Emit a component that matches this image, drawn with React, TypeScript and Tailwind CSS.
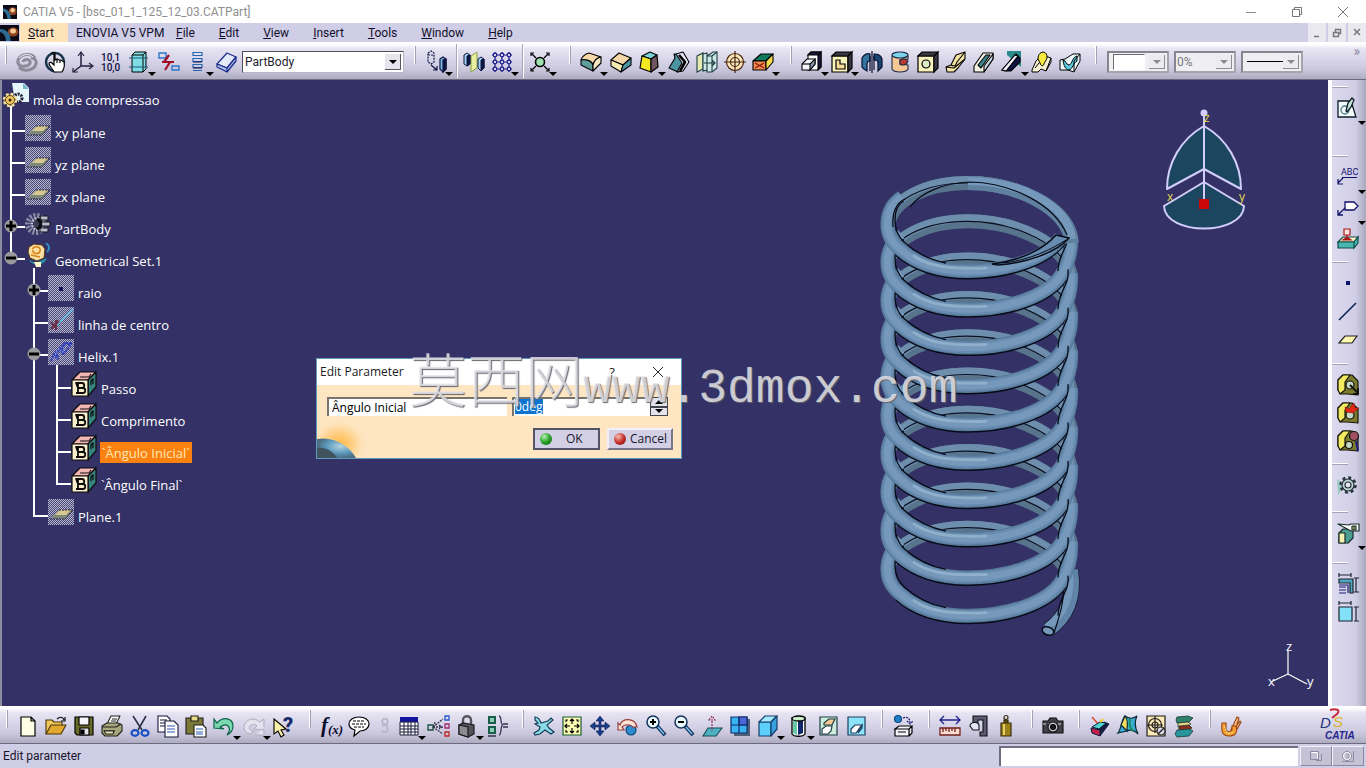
import type { ReactNode } from "react";
import clsx from "clsx";

type Tool = { icon: string; label: string; menu?: boolean; narrow?: boolean };

const NAVY = "#10106a";

const icons: Record<string, ReactNode> = {
  update: (
    <g fill="none" stroke="#8d8b98" strokeWidth="3">
      <path d="M20 8C17 3 6 3 3 10c-1 5 3 7 7 6 4 0 6-3 5-5-2-3-7-1-7 1" />
      <path d="M4 17c4 5 15 4 17-3 1-4-2-6-5-6" />
      <path d="M4 8c5-5 11-4 14-1" stroke="#f3f2f8" strokeWidth="1" />
    </g>
  ),
  hand: (
    <g stroke="#000" strokeWidth="1.2">
      <circle cx="12" cy="12" r="9" fill="none" stroke="#18324a" strokeWidth="2.5" />
      <path
        d="M9 3c1-1 3-1 3 1v6l2-1 2 1 2 0 3 2c1 4 0 7-2 10h-8c-1-3-4-5-5-8 0-2 2-2 3-1l2 2V4z"
        fill="#fff"
      />
      <path d="M14 9v4M17 10v3" />
    </g>
  ),
  axis: (
    <g fill="none" stroke="#20203c" strokeWidth="1.5">
      <path d="M10 3v13h11M10 16l-8 6" />
      <path d="M7 6l3-4 3 4M18 13l4 3-4 3M2 18v4h5" strokeWidth="1.2" />
    </g>
  ),
  numbers: (
    <g fontFamily="Roboto, sans-serif" fontSize="10" fontWeight="500" fill="#0d0d3c">
      <text x="2" y="11">10,1</text>
      <text x="2" y="21">10,0</text>
    </g>
  ),
  cylinder: (
    <g stroke="#000" strokeWidth="1">
      <path d="M5 5l3-3h11v17l-3 3H5z" fill="#7fdde6" />
      <path d="M5 5h11v17M16 5l3-3" fill="none" />
      <path d="M2 8h19M2 17h19" stroke="#1b5c7a" />
    </g>
  ),
  broken: (
    <g fill="none">
      <path d="M2 3h7v5H2zM15 16h7v4h-7z" stroke="#2b78c8" strokeWidth="1.4" />
      <path d="M12 5l-5 7h6l-5 8M5 12h12" stroke="#a01028" strokeWidth="2.2" />
    </g>
  ),
  stack: (
    <g fill="none" stroke="#2468b4" strokeWidth="1.2">
      <path d="M8 2.500h9v3H8zM8 8.500h9v3H8zM8 14.500h9v3H8zM8 20.500h9" />
      <path d="M8 12h9M8 18h9" stroke="#10104a" />
    </g>
  ),
  slab: (
    <g stroke="#1e2a8a" strokeWidth="1.2" strokeLinejoin="round">
      <path d="M2 14L12 3l9 4-9 11z" fill="#e4e9f8" />
      <path d="M2 14v3l10 5v-4zM12 18l9-11v4l-9 11z" fill="#a8bce4" />
    </g>
  ),
  move: (
    <g stroke="#0d1440" strokeWidth="1.2">
      <path d="M4 3l3-2 3 2v9l-3 2-3-2zM4 5h6" fill="none" strokeDasharray="2 1" />
      <path d="M7 15l6 5M13 16v4h-4" fill="none" />
      <path d="M16 9l3-2 3 2v10l-3 3-3-3z" fill="#7fc0ec" />
      <path d="M19 10v12l3-3V9z" fill="#0d1440" />
    </g>
  ),
  mirror: (
    <g stroke="#0d1440" strokeWidth="1">
      <path d="M2 5l3-2 3 2v9l-3 2-3-2z" fill="#a4d4f0" />
      <path d="M9 6l6-4v16l-6 4z" fill="#e8efa0" stroke="#8aa040" />
      <path d="M16 9l3-2 3 2v9l-3 3-3-3z" fill="#a4d4f0" />
      <path d="M19 10v11l3-3V9zM5 6v10l3-2V5z" fill="#0d1440" />
    </g>
  ),
  grid: (
    <g fill="none" stroke="#1a1a8c" strokeWidth="1.2">
      <path d="M2 5h20M2 12h20M2 19h20M5 2v20M12 2v20M19 2v20" />
      <g fill="#d8d6ea">
        <circle cx="5" cy="5" r="1.8" />
        <circle cx="12" cy="5" r="1.8" />
        <circle cx="19" cy="5" r="1.8" />
        <circle cx="5" cy="12" r="1.8" />
        <circle cx="12" cy="12" r="1.8" />
        <circle cx="19" cy="12" r="1.8" />
        <circle cx="5" cy="19" r="1.8" />
        <circle cx="12" cy="19" r="1.8" />
        <circle cx="19" cy="19" r="1.8" />
      </g>
    </g>
  ),
  explode: (
    <g stroke="#000" strokeWidth="1.2" fill="none">
      <path d="M8 8L4 4M16 8l4-4M8 16l-4 4M16 16l4 4M3 6V3h3M18 3h3v3M3 18v3h3M18 21h3v-3" />
      <circle cx="12" cy="12" r="4.500" fill="#9fe0b0" strokeWidth="1.6" />
    </g>
  ),
  fillet: (
    <g stroke="#000" strokeWidth="1.1" strokeLinejoin="round">
      <path d="M2 10c1-3 4-6 8-7l12 4c-5 1-7 4-8 8C13 11 7 9 2 10z" fill="#f6d8a8" />
      <path d="M2 10c6-1 11 1 12 5v6L2 15z" fill="#5f9c9c" />
      <path d="M14 15c1-4 3-7 8-8v6l-8 8z" fill="#f3e6c0" />
    </g>
  ),
  chamfer: (
    <g stroke="#000" strokeWidth="1.1" strokeLinejoin="round">
      <path d="M2 10l8-7 12 5-8 7z" fill="#f6d8a8" />
      <path d="M2 10l12 5-2 7-10-6z" fill="#f8ecb4" />
      <path d="M14 15l8-7v7l-10 7z" fill="#4f97a4" />
    </g>
  ),
  draft: (
    <g stroke="#000" strokeWidth="1.2" strokeLinejoin="round">
      <path d="M5 6l8-4 7 3-6 4z" fill="#7ed0da" />
      <path d="M5 6l9 3v13L3 18z" fill="#f4e920" />
      <path d="M14 9l6-4 1 12-7 5z" fill="#6e5560" />
    </g>
  ),
  shell: (
    <g stroke="#000" strokeWidth="1.1" strokeLinejoin="round">
      <path d="M2 18L8 8l-1-4 8 1 1 8-5 9z" fill="#4a95a0" />
      <path d="M9 4l7-2 6 10-6 9-6 1 5-9z" fill="#e6e4f2" />
      <path d="M12 5l6 7-5 9" fill="none" strokeWidth="2.6" />
    </g>
  ),
  thickness: (
    <g stroke="#1c3c44" strokeWidth="1.1">
      <path d="M2 6l6-3v16l-6 3z" fill="#e6e9b0" />
      <path d="M8 4l4-1v17l-4 1zM12 6l6-4h4v16l-5 4h-5z" fill="#cfe8e6" />
      <path d="M12 6h5v16M17 6l5-4M9 13h11M17 10l3 3-3 3" fill="none" />
    </g>
  ),
  target: (
    <g fill="none" stroke="#4a2410" strokeWidth="1.2">
      <circle cx="12" cy="12" r="8.5" fill="#f8e6b8" />
      <circle cx="12" cy="12" r="4.500" />
      <path d="M12 1v22M1 12h22" />
    </g>
  ),
  replaceFace: (
    <g stroke="#000" strokeWidth="1.1" strokeLinejoin="round">
      <path d="M2 11l8-7h12l-7 7z" fill="#137a5c" />
      <path d="M2 11h13v9H2z" fill="#f08a50" />
      <path d="M15 11l7-7v8l-7 8z" fill="#f4dc50" />
      <path d="M4 13l9 5M13 13l-9 5" stroke="#8c1a10" />
    </g>
  ),
  pad: (
    <g stroke="#000" strokeWidth="1.1">
      <path d="M8 5l3-3h10v15l-3 3H8z" fill="#fff" />
      <path d="M18 5l3-3v15l-3 3zM8 5l3-3h10l-3 3z" fill="#191942" />
      <path d="M2 14l5-5h8v5l-5 6H2z" fill="#f3f3fa" />
      <path d="M10 14v6l5-6V9z" fill="#8d96b4" />
      <path d="M2 14h8" />
    </g>
  ),
  pocket: (
    <g stroke="#000" strokeWidth="1.2">
      <path d="M2 6h16v16H2z" fill="#f8f2bc" />
      <path d="M2 6l4-4h16l-4 4zM18 6l4-4v16l-4 4z" fill="#3c3644" />
      <path d="M6 10h4v4h5v5H6z" fill="#f6dc96" />
    </g>
  ),
  shaft: (
    <g stroke="#0a0f30" strokeWidth="1.2">
      <path d="M2 8c2-4 6-5 8-4v7c-2 0-3 1-3 3v7c-2-1-4-2-5-4z" fill="#3474a0" />
      <path d="M14 4c4 0 7 1 8 5v8l-4 4v-8c0-2-2-3-4-3z" fill="#1c4670" />
      <path d="M10 6v15M14 6v14M12 1v22" />
    </g>
  ),
  groove: (
    <g stroke="#1a2a48" strokeWidth="1.1">
      <path d="M4 6v13c2 4 14 4 16 0v-4l-8-1v-4l8-1V6z" fill="#f6c896" />
      <ellipse cx="12" cy="5" rx="8" ry="3" fill="#7cd4ec" />
      <path d="M12 10c3-2 7-1 8 1-1 4-6 5-8 3z" fill="#b83a30" />
    </g>
  ),
  hole: (
    <g stroke="#000" strokeWidth="1.2">
      <path d="M2 6h16v16H2z" fill="#f8f2bc" />
      <path d="M2 6l4-4h16l-4 4zM18 6l4-4v16l-4 4z" fill="#3c3644" />
      <circle cx="10" cy="14" r="4" fill="#dceac8" />
    </g>
  ),
  rib: (
    <g stroke="#000" strokeWidth="1.1" strokeLinejoin="round">
      <path d="M2 17l5-2 5-10 9-3v7l-7 9-4 4H3z" fill="#f6e4a4" />
      <path d="M7 15c4 2 5 0 6-3l8-10M2 17l8 1 11-9" fill="none" />
    </g>
  ),
  slot: (
    <g stroke="#000" strokeWidth="1.1" strokeLinejoin="round">
      <path d="M2 16l9-13h10v6l-9 13H2z" fill="#f4f0e0" />
      <path d="M6 15l8-10h4L9 18z" fill="#3c8490" />
      <path d="M12 16l9-12v5l-9 13z" fill="#c8d8e4" />
    </g>
  ),
  stiffener: (
    <g stroke="#000" strokeWidth="1.1">
      <path d="M7 1h14v16L7 5z" fill="#2a8a8c" stroke="none" />
      <path d="M2 20L16 4l4 4v4l-9 9H5z" fill="#0d1440" />
      <path d="M2 20L15 5l3 1L6 21z" fill="#f6f4fc" />
    </g>
  ),
  loft: (
    <g stroke="#000" strokeWidth="1" strokeLinejoin="round">
      <path d="M2 20l4-9 6-6 9 3-5 13-5-2-3 3H2z" fill="#f4f0d0" />
      <path d="M8 9c0-9 10-9 9-1-1 3-2 3-3 6-1 3-3 2-4-1z" fill="#f8e840" />
      <path d="M5 18l4-5M21 8v4l-5 9" fill="none" />
    </g>
  ),
  loftCut: (
    <g stroke="#000" strokeWidth="1" strokeLinejoin="round">
      <path d="M2 10l5-1 8-5h7v7l-6 11-6-2H2z" fill="#eef8fa" />
      <path d="M5 10c3 0 3 5 6 5s3-8 8-9v5c-4 2-4 8-8 9-4-1-5-4-6-10z" fill="#5cc8e0" />
      <path d="M22 4l-6 7v10" fill="none" />
    </g>
  ),
  newDoc: <path d="M5 3h10l4 4v15H5zM15 3v4h4" fill="#ffffe6" stroke="#000" strokeWidth="1.2" />,
  open: (
    <g stroke="#4a3408" strokeWidth="1.1" strokeLinejoin="round">
      <path d="M2 20V6h6l2 2h8v4" fill="#f0c858" />
      <path d="M2 20l5-9h15l-5 9z" fill="#e0a830" />
      <path d="M13 5c3-3 6-2 7 1M21 3v4h-4" fill="none" stroke="#000" />
    </g>
  ),
  save: (
    <g stroke="#000" strokeWidth="1.2">
      <path d="M3 3h18v18H5l-2-2z" fill="#6a6a28" />
      <path d="M7 3h10v8H7z" fill="#f6f6fa" />
      <path d="M8 14h9v7H8z" fill="#e4e4ea" />
      <path d="M9 16h3v4H9z" fill="#000" />
    </g>
  ),
  print: (
    <g stroke="#20201c" strokeWidth="1.1" strokeLinejoin="round">
      <path d="M7 10l4-8h9l-4 8z" fill="#fff" />
      <path d="M2 12l5-3h11l4 2v6l-5 5H5l-3-3z" fill="#a8a67c" />
      <path d="M2 13h14l5-3M4 17h11M12 5h5M11 7h5" fill="none" />
      <path d="M4 17h10l-1 3H6z" fill="#e9e7c0" />
    </g>
  ),
  cut: (
    <g fill="none" strokeWidth="1.6">
      <path d="M5 2l9 14M18 2l-8 14" stroke="#30304a" />
      <ellipse cx="7" cy="19" rx="3.5" ry="2.8" stroke="#1850c0" strokeWidth="2.2" />
      <ellipse cx="17" cy="19" rx="3.5" ry="2.8" stroke="#1850c0" strokeWidth="2.2" />
    </g>
  ),
  copy: (
    <g stroke="#15153a" strokeWidth="1.1">
      <path d="M2 2h9l3 3v13H2z" fill="#fff" />
      <path d="M4 6h7M4 9h7M4 12h7" />
      <path d="M9 7h9l4 4v12H9z" fill="#fff" />
      <path d="M11 12h8M11 15h8M11 18h8" stroke="#2e5cb0" />
    </g>
  ),
  paste: (
    <g stroke="#1c1c1c" strokeWidth="1.1">
      <path d="M2 4h17v16H2z" fill="#7c7838" />
      <path d="M7 2h7v5H7z" fill="#e8dc8a" />
      <path d="M10 11h9l3 3v9H10z" fill="#fff" />
      <path d="M12 15h7M12 18h7M12 20h7" stroke="#2e5cb0" />
    </g>
  ),
  undo: (
    <path
      d="M2 14V5l3 4c6-7 16-5 16 3 0 4-2 7-6 9 3-4 3-7 1-9-2-2-5-1-8 1l4 2z"
      fill="#7cd8b0"
      stroke="#0c6448"
      strokeWidth="1.2"
    />
  ),
  redo: (
    <path
      d="M22 13V5l-4 3C11 2 2 6 2 14c0 3 3 5 6 6l4-3c-4 0-6-3-4-5 2-2 5-2 7 0l-3 3 10 1v5h-8"
      fill="#e4e2ee"
      stroke="#adabba"
    />
  ),
  whatsThis: (
    <g>
      <path d="M2 5v15l4-3 3 6 3-2-3-5 5-1z" fill="#f8efa8" stroke="#000" strokeWidth="1.1" />
      <text x="11" y="18" fontFamily="Roboto, sans-serif" fontSize="20" fontWeight="900" fill="#162a6c">
        ?
      </text>
    </g>
  ),
  formula: (
    <g fontFamily="Liberation Serif, serif" fontStyle="italic" fontWeight="700" fill="#0c0c2c">
      <text x="2" y="18" fontSize="21">f</text>
      <text x="9" y="20" fontSize="13">(x)</text>
    </g>
  ),
  comment: (
    <g stroke="#000" strokeWidth="1.2">
      <path d="M12 3c6 0 10 3 10 7s-4 7-9 7l-6 5 1-6c-4-1-6-3-6-6 0-4 4-7 10-7z" fill="#fff" />
      <path d="M6 7h12M5 10h14M7 13h10" strokeDasharray="3 1" />
    </g>
  ),
  link: (
    <g fill="none" stroke="#b8b6c6" strokeWidth="2">
      <circle cx="12" cy="7" r="3" />
      <path d="M9 12c3-2 6-1 6 3s-5 5-6 2" />
    </g>
  ),
  table: (
    <g>
      <path d="M3 3h18v5H3z" fill="#1414a0" />
      <path d="M3 8h18v13H3z" fill="#fff" stroke="#1a1a3a" />
      <path d="M3 12h18M3 15h18M3 18h18M7 8v13M11 8v13M14 8v13M18 8v13" stroke="#1a1a3a" />
    </g>
  ),
  relations: (
    <g fill="none" strokeWidth="1.3">
      <path d="M1 11h5v5H1z" stroke="#18503c" />
      <path d="M18 2h4v4h-4z" stroke="#2858c8" />
      <path d="M18 10h4v4h-4z" stroke="#a02868" />
      <path d="M18 18h4v4h-4z" stroke="#c02828" />
      <path d="M6 13l10-8M6 13h10M6 13l10 7M8 8l-1 4M12 11l3 2-3 2" stroke="#33334a" strokeDasharray="2 1" />
    </g>
  ),
  lock: (
    <g stroke="#1c1c20" strokeWidth="1.2">
      <path d="M8 10V6c0-5 8-5 8 0v5" fill="none" stroke="#55555c" strokeWidth="2.4" />
      <path d="M4 11l4-2 11 2v9l-6 3-9-3z" fill="#54545a" />
      <path d="M4 11l9 2v10l-9-3z" fill="#8c8c90" />
    </g>
  ),
  equations: (
    <g>
      <path d="M3 2h8v8H3zM3 12h8v8H3z" fill="#1c5c4a" />
      <path d="M5 4h4v4H5zM5 14h4v4H5z" fill="#8cd0b8" />
      <path d="M14 2c3 0 1 9 4 9-3 0-1 10-4 10M18 10h5M18 13h5M3 22h8" fill="none" stroke="#333350" strokeWidth="1.3" />
    </g>
  ),
  fly: (
    <path
      d="M3 3c3 0 5 3 6 6l7-2 3-3 2 2-6 5 2 3 5 4-3 2-6-4-5 4-5 1-1-2 5-3 1-3-5-3 3-1-3-3z"
      fill="#8adbe8"
      stroke="#173c56"
      strokeWidth="1.2"
    />
  ),
  fitAll: (
    <g>
      <path d="M3 3h18v18H3z" fill="#fbfbb4" stroke="#1a5c30" strokeWidth="1.2" />
      <path
        d="M12 10V5M12 14v5M10 12H5M14 12h5M10 7l2-2 2 2M10 17l2 2 2-2M7 10l-2 2 2 2M17 10l2 2-2 2M6 8V6h2M16 6h2v2M6 16v2h2M18 16v2h-2"
        fill="none"
        stroke="#000"
        strokeWidth="1.2"
      />
    </g>
  ),
  pan: (
    <path
      d="M12 2l4 5h-3v4h4V8l5 4-5 4v-3h-4v4h3l-4 5-4-5h3v-4H7v3l-5-4 5-4v3h4V7H8z"
      fill="#1c3c8c"
      stroke="#0c1c50"
      strokeWidth=".6"
    />
  ),
  rotate: (
    <g strokeWidth="1.2">
      <circle cx="15" cy="16" r="5" fill="#2c8cd0" stroke="#154878" />
      <path d="M2 9v7h6l-2-3c3-3 8-3 11 0h4C19 4 7 3 4 11z" fill="#fbe4d4" stroke="#98403c" />
    </g>
  ),
  zoomIn: (
    <g stroke="#13325c">
      <circle cx="9" cy="8" r="6" fill="#eafaff" strokeWidth="1.5" />
      <path d="M13 12l8 9" strokeWidth="4" />
      <path d="M14 13l6 7" stroke="#7ac0e8" strokeWidth="1.6" />
      <path d="M9 5v6M6 8h6" strokeWidth="2" stroke="#000" />
    </g>
  ),
  zoomOut: (
    <g stroke="#13325c">
      <circle cx="9" cy="8" r="6" fill="#eafaff" strokeWidth="1.5" />
      <path d="M13 12l8 9" strokeWidth="4" />
      <path d="M14 13l6 7" stroke="#7ac0e8" strokeWidth="1.6" />
      <path d="M6 8h6" strokeWidth="2" stroke="#000" />
    </g>
  ),
  normalView: (
    <g strokeWidth="1.1">
      <path d="M3 22l5-8h14l-6 8z" fill="#4fb0c0" stroke="#174c58" />
      <path d="M9 6l3-4 3 4zM12 7v10" fill="none" stroke="#8c2858" strokeDasharray="2 1" />
    </g>
  ),
  multiView: (
    <g stroke="#102c70" strokeWidth="1.2">
      <path d="M6 5h16v17H6z" fill="#506078" stroke="none" />
      <path d="M3 3h16v16H3z" fill="#38b4f0" />
      <path d="M11 3h8v8h-8z" fill="#4c68d8" />
      <path d="M11 3v16M3 11h16" />
    </g>
  ),
  isoView: (
    <g stroke="#143c6c" strokeWidth="1.2" strokeLinejoin="round">
      <path d="M3 8h12v14H3z" fill="#5cd0fa" />
      <path d="M3 8l6-6h12l-6 6z" fill="#a4e8fc" />
      <path d="M15 8l6-6v13l-6 7z" fill="#38a0dc" />
    </g>
  ),
  shading: (
    <g stroke="#000" strokeWidth="1.3">
      <path d="M6 4v16c2 3 11 3 13 0V4z" fill="#fff" />
      <path d="M7 7h4v14l-4-2z" fill="#68c8a8" stroke="none" />
      <path d="M12 7h5v12l-5 2z" fill="#12286c" stroke="none" />
      <ellipse cx="12.500" cy="4.500" rx="6.500" ry="2.500" fill="#cdeecb" />
    </g>
  ),
  hideShow: (
    <g stroke="#1c3c44" strokeWidth="1.2">
      <path d="M4 3h17v18H4z" fill="#cdeedd" />
      <path d="M8 9l5-4h6l-3 6H8z" fill="#f4c890" />
      <path d="M6 15l4-3h6l-1 5-3 3H6z" fill="#fff" />
    </g>
  ),
  swapVisible: (
    <g stroke="#1c3c5c" strokeWidth="1.2">
      <path d="M4 3h17v18H4z" fill="#8ce4fa" />
      <path d="M7 15l4-4h7l-3 4-3 4H7z" fill="#fff" />
      <path d="M15 15l3-4v3l-4 5z" fill="#58687c" />
    </g>
  ),
  catalog: (
    <g strokeWidth="1.2" fill="none">
      <circle cx="7" cy="5" r="3.500" fill="#2080d0" stroke="#124878" />
      <path d="M12 4c5-2 7 1 7 5M16 7l3 3 3-3" stroke="#1c1c70" strokeDasharray="2 1" />
      <path d="M4 15l4-3h13l-3 3zM4 15h14v7H4zM18 22l3-3v-7M7 18h8" stroke="#000" fill="#f6f6fc" />
    </g>
  ),
  measure: (
    <g fill="none" strokeWidth="1.3">
      <path d="M2 6h20M6 2L2 6l4 4M18 2l4 4-4 4" stroke="#23238c" />
      <path d="M2 14h20v7H2z" fill="#fbdcd0" stroke="#70201c" />
      <path d="M5 14v4M8 14v3M11 14v4M14 14v3M17 14v4" stroke="#70201c" />
    </g>
  ),
  caliper: (
    <g stroke="#101018" strokeWidth="1.1">
      <path d="M7 2h14v20h-7v-4h3V6h-5v3H7z" fill="#5a5a70" />
      <path d="M4 12c0-4 8-5 9-1v5H7z" fill="#e4e6f2" />
    </g>
  ),
  inertia: (
    <g stroke="#3a300c" strokeWidth="1.2">
      <circle cx="12" cy="3.500" r="2" fill="none" />
      <path d="M10 6h4v3H10z" fill="#5c4c14" />
      <path d="M7 9h10v13H7z" fill="#9a8018" />
      <path d="M10 10v11" stroke="#e4cf60" strokeWidth="2" />
    </g>
  ),
  camera: (
    <g stroke="#0c0c10" strokeWidth="1.1">
      <path d="M2 7h5l2-3h6l2 3h5v12H2z" fill="#404048" />
      <path d="M2 10h20" stroke="#d8d8e0" strokeDasharray="3 2" />
      <circle cx="12" cy="13" r="5" fill="#c4c4cc" />
      <circle cx="12" cy="13" r="2.500" fill="#18181c" />
    </g>
  ),
  render: (
    <g stroke="#0c1c40" strokeWidth="1">
      <path d="M4 3l7 8" stroke="#e04020" strokeWidth="1.4" />
      <path d="M8 14l8-6 5 2-9 12z" fill="#141c40" />
      <path d="M3 14l9 2v6l-8-3z" fill="#c4204c" />
      <path d="M4 13l8-5 6 1-7 6z" fill="#50d8d0" />
      <path d="M12 8l3-3" stroke="#f4d020" strokeWidth="2" />
    </g>
  ),
  drape: (
    <g stroke="#0c2838" strokeWidth="1.2">
      <path d="M2 19C5 16 6 4 9 2c4 3 8 3 12 0-3 6-2 12 1 18-4-4-7-5-11-3z" fill="#3aacd0" />
      <path d="M9 2c4 5 2 9 2 15L5 11z" fill="#f2dc5c" />
      <path d="M14 5c-1 5 0 9 3 12" stroke="#1a8c60" strokeWidth="2" fill="none" />
    </g>
  ),
  analysis: (
    <g stroke="#1c1c1c" strokeWidth="1.2" fill="none">
      <path d="M3 2h18v20H3z" fill="#fbe8b4" />
      <circle cx="11" cy="11" r="6.500" />
      <circle cx="11" cy="11" r="3" />
      <path d="M11 2v17M3 11h16" />
      <circle cx="17" cy="17" r="4" fill="#d8dce8" />
      <path d="M14 20l6-6" />
    </g>
  ),
  layers: (
    <g stroke="#1c3830" strokeWidth=".8">
      <path d="M5 3l11-1 5 2-4 4-12 1-1-3z" fill="#30806c" />
      <path d="M6 9l10-1 3 2-3 2-10 1z" fill="#e8d888" />
      <path d="M7 12l10-1 3 3-3 2-10 1z" fill="#8c2c20" />
      <path d="M5 16l12-1 4 2-4 5-12 1-2-3z" fill="#28949c" />
    </g>
  ),
  apply: (
    <g stroke="#9c4410" strokeWidth="1.1">
      <path d="M12 16l6-13 2 1-3 10zM15 15l6-8 1 1-5 9z" fill="#f4c088" />
      <path d="M3 9h4v7c1 2 5 2 6 0v-4h4c2 7-1 10-7 10s-8-3-7-13z" fill="#f4a030" />
      <path d="M5 12l3 7M9 20l6-2" stroke="#fce498" strokeDasharray="2 1" />
    </g>
  ),
  sketch: (
    <g stroke="#0c1c28" strokeWidth="1.3">
      <path d="M2 5h13l5 16H2z" fill="#f3fbfb" />
      <circle cx="9" cy="14" r="4" fill="none" stroke="#4c7c88" />
      <path d="M10 15l2-8 4-5 2 2-3 7-4 5z" fill="#c8e8d8" />
    </g>
  ),
  textNote: (
    <g>
      <text x="5" y="10" fontFamily="Roboto, sans-serif" fontSize="9" fill={NAVY}>ABC</text>
      <path d="M6 12.500h15M7 13l-5 5M2 14v5h5" fill="none" stroke={NAVY} strokeWidth="1.2" />
    </g>
  ),
  flagNote: (
    <g fill="none" stroke={NAVY} strokeWidth="1.3">
      <path d="M9 6h9l4 4-4 4H9z" fill="#fff" />
      <path d="M9 12l-7 7M2 14v5h5" />
    </g>
  ),
  stamp: (
    <g strokeWidth="1.2">
      <path d="M2 15l5-5h15l-4 5z" fill="#fbf4c8" stroke="#124c48" />
      <path d="M2 15h16v6H2zM18 15l4-5v6l-4 5z" fill="#46b8b0" stroke="#124c48" />
      <path d="M8 2h6v6H8z" fill="#fbe4e0" stroke="#a81818" />
      <path d="M11 8v5M7 13h8l-4-3z" fill="#a81818" stroke="#a81818" />
    </g>
  ),
  point: <path d="M10 10h4v4h-4z" fill="#0c1470" />,
  line: <path d="M3 21L20 4" stroke="#0c2058" strokeWidth="1.6" />,
  plane: <path d="M3 16l6-7h12l-5 7z" fill="#fbf6b0" stroke="#222" strokeWidth="1.2" />,
  boxPick: (
    <g stroke="#14140c" strokeWidth="1.2" strokeLinejoin="round">
      <path d="M2 7l5-5h9l6 6v14l-11-1H5l-3-4z" fill="#7c7a2c" />
      <path d="M2 7l5-5h7l-5 7v8l-5 4-2-4z" fill="#f2ea60" />
      <circle cx="14" cy="12" r="4" fill="#c4d8c8" />
      <path d="M14 12l8 8M22 15v6h-5" fill="none" strokeWidth="2" />
    </g>
  ),
  boxRed: (
    <g stroke="#14140c" strokeWidth="1.2" strokeLinejoin="round">
      <path d="M2 7l5-5h9l6 6v14l-11-1H5l-3-4z" fill="#7c7a2c" />
      <path d="M2 7l5-5h7l-5 7v8l-5 4-2-4z" fill="#f2ea60" />
      <circle cx="14" cy="14" r="4" fill="#c4d8c8" />
      <path d="M9 6l4 2 5-6 1 5 4 0-6 5-7-1z" fill="#e42818" stroke="#901008" strokeWidth=".6" />
    </g>
  ),
  boxZoom: (
    <g stroke="#14140c" strokeWidth="1.2" strokeLinejoin="round">
      <path d="M2 7l5-5h9l6 6v14l-11-1H5l-3-4z" fill="#7c7a2c" />
      <path d="M2 7l5-5h7l-5 7v8l-5 4-2-4z" fill="#f2ea60" />
      <circle cx="13" cy="16" r="3.500" fill="#c4d8c8" />
      <circle cx="18" cy="7" r="4.500" fill="#a05060" />
      <path d="M20 12l2 10" stroke="#1c1c8c" strokeWidth="2" />
    </g>
  ),
  gear: (
    <g>
      <path d="M1 6l9 6-8 10z" fill="#9cccc4" />
      <circle cx="12" cy="12" r="7.500" fill="none" stroke="#26343c" strokeWidth="2.500" strokeDasharray="3 2.890" />
      <circle cx="12" cy="12" r="6" fill="#c4d4d4" stroke="#26343c" strokeWidth="1.2" />
      <circle cx="12" cy="12" r="3" fill="#e4e4f0" stroke="#26343c" strokeWidth="1.2" />
    </g>
  ),
  cubeTag: (
    <g stroke="#182c28" strokeWidth="1.2" strokeLinejoin="round">
      <path d="M3 12l4-4h10v9l-5 5H3z" fill="#4c9c90" />
      <path d="M3 12h6v10H3z" fill="#f6f4b4" />
      <path d="M2 3l11 1 2-1h8v7h-8z" fill="#fff" />
      <path d="M16 5h4v4h-4zM18 5v4" fill="#eee890" />
    </g>
  ),
  dimDetail: (
    <g fill="none" stroke="#1c2430" strokeWidth="1.2">
      <path d="M3 1v4M15 1v4M3 3h12M18 6h5M18 20h5M20 6v14" />
      <path d="M3 7h14v14H14V11H3z" fill="#50a8c0" />
      <path d="M3 13h9v8M3 15h7M3 18h7M3 21h7" stroke="#1c1c70" />
    </g>
  ),
  dimBox: (
    <g fill="none" stroke="#1c2430" strokeWidth="1.2">
      <path d="M3 1v4M15 1v4M3 3h12M18 7h5M18 21h5M20 7v14" />
      <path d="M3 7h13v14H3z" fill="#84e0f8" />
    </g>
  ),
};

const topTools: Record<string, Tool[]> = {
  standard: [
    { icon: "update", label: "Update all" },
    { icon: "hand", label: "Manual update" },
    { icon: "axis", label: "Axis system" },
    { icon: "numbers", label: "Mean dimensions" },
    { icon: "cylinder", label: "Create datum", menu: true },
    { icon: "broken", label: "Isolate" },
    { icon: "stack", label: "Historical graph", menu: true },
    { icon: "slab", label: "Work on support" },
  ],
  translate: [{ icon: "move", label: "Translation", menu: true }],
  pattern: [
    { icon: "mirror", label: "Mirror" },
    { icon: "grid", label: "Rectangular pattern", menu: true },
  ],
  scale: [{ icon: "explode", label: "Scaling", menu: true }],
  dressUp: [
    { icon: "fillet", label: "Edge fillet", menu: true },
    { icon: "chamfer", label: "Chamfer" },
    { icon: "draft", label: "Draft angle", menu: true },
    { icon: "shell", label: "Shell" },
    { icon: "thickness", label: "Thickness" },
    { icon: "target", label: "Thread/Tap" },
    { icon: "replaceFace", label: "Replace face", menu: true },
  ],
  sketchBased: [
    { icon: "pad", label: "Pad", menu: true },
    { icon: "pocket", label: "Pocket", menu: true },
    { icon: "shaft", label: "Shaft" },
    { icon: "groove", label: "Groove" },
    { icon: "hole", label: "Hole" },
    { icon: "rib", label: "Rib" },
    { icon: "slot", label: "Slot" },
    { icon: "stiffener", label: "Stiffener", menu: true },
    { icon: "loft", label: "Multi-sections solid" },
    { icon: "loftCut", label: "Removed multi-sections solid" },
  ],
};

const bottomTools: Tool[][] = [
  [
    { icon: "newDoc", label: "New" },
    { icon: "open", label: "Open" },
    { icon: "save", label: "Save" },
    { icon: "print", label: "Quick print" },
    { icon: "cut", label: "Cut" },
    { icon: "copy", label: "Copy" },
    { icon: "paste", label: "Paste" },
    { icon: "undo", label: "Undo", menu: true },
    { icon: "redo", label: "Redo", menu: true },
    { icon: "whatsThis", label: "What's this?" },
  ],
  [
    { icon: "formula", label: "Formula" },
    { icon: "comment", label: "Comment" },
    { icon: "link", label: "Link", narrow: true },
    { icon: "table", label: "Design table", menu: true },
    { icon: "relations", label: "Relations" },
    { icon: "lock", label: "Lock", menu: true },
    { icon: "equations", label: "Equivalent dimensions" },
  ],
  [
    { icon: "fly", label: "Fly mode" },
    { icon: "fitAll", label: "Fit all in" },
    { icon: "pan", label: "Pan" },
    { icon: "rotate", label: "Rotate" },
    { icon: "zoomIn", label: "Zoom in" },
    { icon: "zoomOut", label: "Zoom out" },
    { icon: "normalView", label: "Normal view" },
    { icon: "multiView", label: "Create multi-view" },
    { icon: "isoView", label: "Isometric view", menu: true },
    { icon: "shading", label: "Shading with edges", menu: true },
    { icon: "hideShow", label: "Hide/Show" },
    { icon: "swapVisible", label: "Swap visible space" },
  ],
  [{ icon: "catalog", label: "Catalog browser" }],
  [
    { icon: "measure", label: "Measure between" },
    { icon: "caliper", label: "Measure item" },
    { icon: "inertia", label: "Measure inertia" },
  ],
  [{ icon: "camera", label: "Capture" }],
  [
    { icon: "render", label: "Render" },
    { icon: "drape", label: "Draft analysis" },
    { icon: "analysis", label: "Curvature analysis" },
    { icon: "layers", label: "Tap analysis" },
  ],
  [{ icon: "apply", label: "Apply material" }],
];

const sideTools: { className: string; tools: Tool[] }[] = [
  { className: "mb-[30px]", tools: [{ icon: "sketch", label: "Sketch", menu: true }] },
  {
    className: "mb-2",
    tools: [
      { icon: "textNote", label: "Text with leader", menu: true },
      { icon: "flagNote", label: "Flag note", menu: true },
      { icon: "stamp", label: "Stamp" },
    ],
  },
  {
    className: "mb-[10px]",
    tools: [
      { icon: "point", label: "Point" },
      { icon: "line", label: "Line" },
      { icon: "plane", label: "Plane" },
    ],
  },
  {
    className: "mb-2",
    tools: [
      { icon: "boxPick", label: "Assemble" },
      { icon: "boxRed", label: "Remove" },
      { icon: "boxZoom", label: "Inspect" },
    ],
  },
  { className: "mb-3", tools: [{ icon: "gear", label: "Settings" }] },
  { className: "mb-3", tools: [{ icon: "cubeTag", label: "Publication", menu: true }] },
  {
    className: "",
    tools: [
      { icon: "dimDetail", label: "Detailed dimensions" },
      { icon: "dimBox", label: "Bounding dimensions" },
    ],
  },
];

const menus = ["File", "Edit", "View", "Insert", "Tools", "Window", "Help"];

function ToolButton({ tool, vertical }: Readonly<{ tool: Tool; vertical?: boolean }>) {
  return (
    <button
      type="button"
      aria-label={tool.label}
      className={clsx(
        "relative flex flex-none pt-[2px]",
        vertical && "w-8 justify-center",
        vertical && (tool.menu ? "h-[31px]" : "h-7"),
        !vertical && "h-7",
        !vertical && (tool.menu ? "w-[30px] pl-px" : tool.narrow ? "w-[22px]" : "w-7 pl-px"),
      )}
    >
      <svg viewBox="0 0 24 24" className={clsx("h-6 flex-none", tool.narrow ? "w-[22px]" : "w-6")} aria-hidden="true">
        {icons[tool.icon]}
      </svg>
      {tool.menu && (
        <svg
          viewBox="0 0 8 4"
          className={clsx("absolute bottom-0 h-1 w-2", vertical ? "-right-[2px]" : "right-0")}
          aria-hidden="true"
        >
          <path d="M0 0h8L4 4z" fill="#000" />
        </svg>
      )}
    </button>
  );
}

function Grip() {
  return <div className="mt-[2px] mr-[7px] h-[18px] w-[2px] flex-none border-r border-[#a3a1b6] bg-white" />;
}

function Divider() {
  return <div className="mx-[3px] h-[34px] w-[2px] flex-none border-r border-white bg-[#a8a6ba]" />;
}

function ToolGroup({ tools, children }: Readonly<{ tools: Tool[]; children?: ReactNode }>) {
  return (
    <div className="mr-[10px] flex flex-none" role="toolbar">
      <Grip />
      <div className="flex pt-1">
        {tools.map((tool) => (
          <ToolButton key={tool.icon} tool={tool} />
        ))}
      </div>
      {children}
    </div>
  );
}

function PlanetIcon({ className }: Readonly<{ className: string }>) {
  return (
    <svg viewBox="0 0 16 16" className={className} preserveAspectRatio="none" aria-hidden="true">
      <rect width="16" height="16" fill="#0d0a18" />
      <circle cx="11" cy="7" r="4.500" fill="#8c4420" />
      <circle cx="11" cy="6" r="2.500" fill="#f4c890" />
      <path d="M0 4c5 0 9 4 9 12H5C5 11 3 8 0 7z" fill="#2c6c94" />
    </svg>
  );
}

function TitleBar() {
  return (
    <header className="flex h-[23px] items-center bg-white pl-[3px] text-[#8f8f8f]">
      <PlanetIcon className="mr-[6px] size-[14px]" />
      <h1 className="flex-1">CATIA V5 - [bsc_01_1_125_12_03.CATPart]</h1>
      <button type="button" aria-label="Minimize" className="flex w-[46px] justify-center">
        <svg viewBox="0 0 12 12" className="size-3" fill="none" stroke="#8a8a8a">
          <path d="M1 6.500h10" />
        </svg>
      </button>
      <button type="button" aria-label="Restore" className="flex w-[46px] justify-center">
        <svg viewBox="0 0 12 12" className="size-3" fill="none" stroke="#777">
          <path d="M1.500 3.500h7v7h-7zM3.500 3.500v-2h7v7h-2" />
        </svg>
      </button>
      <button type="button" aria-label="Close" className="flex w-[46px] justify-center">
        <svg viewBox="0 0 12 12" className="size-3" fill="none" stroke="#777">
          <path d="M1 1l10 10M11 1L1 11" />
        </svg>
      </button>
    </header>
  );
}

function MenuBar() {
  return (
    <nav className="flex h-[19px] items-stretch bg-[#d0cde6] text-[#10102c]">
      <PlanetIcon className="mr-px h-4 w-[19px] self-center" />
      <button type="button" className="w-12 bg-[#ffe3b8] pl-2 text-left">
        <u>S</u>tart
      </button>
      <button type="button" className="w-[96px] pl-2 text-left whitespace-nowrap">
        ENOVIA V5 VPM
      </button>
      {menus.map((menu) => (
        <button key={menu} type="button" className="px-3 text-left">
          <u>{menu[0]}</u>
          {menu.slice(1)}
        </button>
      ))}
      <div className="ml-auto flex gap-[2px]">
        {[
          { label: "Minimize document", d: "M2 9.500h5" },
          { label: "Restore document", d: "M1.500 5.500h5v4h-5zM3.500 5V2.500h5v4H7" },
          { label: "Close document", d: "M2 2l6 6M8 2L2 8" },
        ].map((control) => (
          <button
            key={control.label}
            type="button"
            aria-label={control.label}
            className="flex w-[18px] items-center justify-center bg-[#e9e9ef]"
          >
            <svg viewBox="0 0 10 11" className="h-[11px] w-[10px]" fill="none" stroke="#77777f" strokeWidth="1.500">
              <path d={control.d} />
            </svg>
          </button>
        ))}
      </div>
    </nav>
  );
}

function SelectArrow({ muted }: Readonly<{ muted?: boolean }>) {
  return (
    <span
      className={clsx(
        "pointer-events-none absolute inset-y-[2px] right-[2px] flex w-4 items-center justify-center border-r border-b",
        muted ? "border-[#8c8c94] bg-[#ececf0]" : "border-[#55555f] bg-[#e6e5ee]",
      )}
    >
      <svg viewBox="0 0 8 4" className="h-1 w-2">
        <path d="M0 0h8L4 4z" fill={muted ? "#8c8c90" : "#000"} />
      </svg>
    </span>
  );
}

function PropertySelect({ label, value, swatch }: Readonly<{ label: string; value?: string; swatch?: ReactNode }>) {
  return (
    <div className="relative mr-[5px] h-[22px] w-[62px] flex-none border-2 border-[#85858f] border-r-[#a5a5af] border-b-[#a5a5af] bg-[#efeff2]">
      <select
        aria-label={label}
        disabled
        className="block h-full w-full appearance-none bg-transparent pl-px text-[#77777d] opacity-100"
      >
        <option>{value ?? ""}</option>
      </select>
      {swatch}
      <SelectArrow muted />
    </div>
  );
}

const toolbarClasses =
  "flex overflow-hidden bg-[linear-gradient(to_bottom,#ffffff_0,#ffffff_2px,#e6e4f1_7px,#d5d2e8_20px,#c9c6dc_28px,#b0aec2_36px)]";

function TopToolbar() {
  return (
    <div className={clsx(toolbarClasses, "h-[38px] border-b border-[#6c6a80] pt-[2px] pl-[5px]")}>
      <ToolGroup tools={topTools.standard}>
        <div className="relative mt-[7px] h-[22px] w-[162px] flex-none border border-[#4d4d58] border-r-[#b8b8c4] border-b-[#b8b8c4] bg-white">
          <select aria-label="In work object" className="block h-full w-full appearance-none bg-transparent pl-[2px] text-[#22222c]">
            <option>PartBody</option>
          </select>
          <SelectArrow />
        </div>
      </ToolGroup>
      <div className="flex">
        <Grip />
        {[topTools.translate, topTools.pattern, topTools.scale].map((tools, index) => (
          <div key={tools[0].icon} className="flex">
            {index > 0 && <Divider />}
            <div className="flex pt-1">
              {tools.map((tool) => (
                <ToolButton key={tool.icon} tool={tool} />
              ))}
            </div>
          </div>
        ))}
      </div>
      <div className="w-3 flex-none" />
      <ToolGroup tools={topTools.dressUp} />
      <ToolGroup tools={topTools.sketchBased} />
      <Grip />
      <div className="flex pt-[7px] pl-[3px]">
        <PropertySelect
          label="Fill color"
          swatch={
            <span className="absolute top-[1px] left-[4px] h-4 w-8 border border-[#6d6d75] border-r-white border-b-white bg-white" />
          }
        />
        <PropertySelect label="Transparency" value="0%" />
        <PropertySelect
          label="Line type"
          swatch={<span className="absolute top-[8px] left-[4px] h-px w-9 bg-black" />}
        />
      </div>
      <span className="mr-[6px] ml-auto text-[14px] leading-[14px] text-[#8b89a4]">»</span>
    </div>
  );
}

type TreeItem = {
  label: string;
  depth: 0 | 1 | 2;
  icon: "plane" | "body" | "set" | "point" | "line" | "helix" | "param";
  toggle?: "+" | "-";
  selected?: boolean;
};

const treeItems: TreeItem[] = [
  { label: "xy plane", depth: 0, icon: "plane" },
  { label: "yz plane", depth: 0, icon: "plane" },
  { label: "zx plane", depth: 0, icon: "plane" },
  { label: "PartBody", depth: 0, icon: "body", toggle: "+" },
  { label: "Geometrical Set.1", depth: 0, icon: "set", toggle: "-" },
  { label: "raio", depth: 1, icon: "point", toggle: "+" },
  { label: "linha de centro", depth: 1, icon: "line" },
  { label: "Helix.1", depth: 1, icon: "helix", toggle: "-" },
  { label: "Passo", depth: 2, icon: "param" },
  { label: "Comprimento", depth: 2, icon: "param" },
  { label: "`Ângulo Inicial`", depth: 2, icon: "param", selected: true },
  { label: "`Ângulo Final`", depth: 2, icon: "param" },
  { label: "Plane.1", depth: 1, icon: "plane" },
];

const hiddenTexture =
  "bg-[conic-gradient(#b4b4cc_25%,#4c4a78_0_50%,#b4b4cc_0_75%,#4c4a78_0)] bg-[length:2px_2px]";

const treeIcons: Record<TreeItem["icon"], ReactNode> = {
  plane: (
    <g>
      <path d="M3 19l8-8h14l-8 9z" fill="#7c8878" />
      <path d="M7 16l5-5h11l-5 5z" fill="#d8c890" />
      <path d="M2 20h15l8-9M11 11h14" fill="none" stroke="#22223c" strokeDasharray="2 1" />
    </g>
  ),
  body: (
    <g>
      <circle cx="11" cy="13" r="8" fill="none" stroke="#8c8ca8" strokeWidth="6" strokeDasharray="2 1.500" />
      <circle cx="13" cy="13" r="6" fill="#3c3c54" stroke="#c4c4d4" strokeWidth="2" strokeDasharray="2 1" />
      <path d="M15 5h8v4h-7zM16 11h9v4h-9zM15 17h8v4h-8z" fill="#bcbccc" stroke="#16161e" />
      <path d="M12 8c5 2 5 8 0 10" fill="none" stroke="#0c0c14" strokeWidth="3" />
    </g>
  ),
  set: (
    <g>
      <path d="M4 17c3 6 15 7 18-2l-5 2-6 3z" fill="#2c8ca4" />
      <path d="M4 4l5-3 8 1 3 4-1 9-7 3-7-3-2-6z" fill="#fbe0a4" stroke="#503818" />
      <path d="M7 6c4-4 9-2 8 2s-8 3-7-1M6 12l9 2" fill="none" stroke="#d88018" strokeWidth="1.500" />
      <path d="M21 0c4 3 4 6 1 9" fill="none" stroke="#348cc4" strokeWidth="2" />
      <path d="M9 19h7v5h-5z" fill="#fff6cc" />
    </g>
  ),
  point: <path d="M11 12h4v4h-4z" fill="#14145c" />,
  line: (
    <g>
      <path d="M7 20L25 2" stroke="#6cb8dc" strokeWidth="2" />
      <path d="M3 15l4 5M8 13v10M3 22l8-8" stroke="#6c2c44" strokeWidth="2" />
    </g>
  ),
  helix: (
    <g fill="none" stroke="#2c3cbc" strokeWidth="2" strokeDasharray="2 1">
      <path d="M3 22c2-6 5-7 7-5s-3 5-2 0 5-8 7-5-3 5-1-1 5-8 8-5M5 16L17 4h7l-9 12" />
      <path d="M6 19l4-9 5 3 3-8 4 4" stroke="#8c98e4" strokeWidth="1" />
    </g>
  ),
  param: (
    <g stroke="#0c0c0c" strokeWidth="1.200" strokeLinejoin="round">
      <path d="M1 9l8-8h16l-8 8z" fill="#f4b8b4" />
      <path d="M17 9l8-8v15l-8 9z" fill="#38807c" />
      <path d="M1 9h16v16H1z" fill="#fbeecc" />
      <path d="M5 12h6c3 0 3 5 0 5H7zM7 17h5c3 0 3 5 0 5H5M7 12v10" fill="none" strokeWidth="1.800" />
      <path d="M9 6h9l2-3M20 14v-4l2-2v5" fill="none" />
    </g>
  ),
};

const depthPadding = ["pl-1", "pl-[27px]", "pl-[50px]"];

function SpecTree() {
  return (
    <div className="absolute top-0 left-0 pt-[3px] text-[13px] text-white">
      <svg viewBox="0 0 100 450" className="absolute top-0 left-0 h-[450px] w-[100px]" aria-hidden="true">
        <path
          d="M11 26V178M11 51h14M11 83h14M11 115h14M11 147h14M11 179h14M34 188V436M34 211h14M34 243h14M34 275h14M33 436h15M57 284V404M57 308h14M57 340h14M57 372h14M56 404h15"
          fill="none"
          stroke="#fff"
          strokeWidth="2"
        />
      </svg>
      <ul className="relative">
        <li className="flex h-8 pl-[3px]">
          <svg viewBox="0 0 26 26" className="mr-1 size-[26px]" aria-hidden="true">
            <path d="M9 0h12l5 5v14H12z" fill="#e4f6fa" />
            <path d="M20 0l6 6h-6z" fill="#78b8cc" />
            <circle cx="15" cy="15" r="4" fill="none" stroke="#20203c" strokeWidth="3" strokeDasharray="2 1" />
            <circle cx="7" cy="17" r="5.500" fill="#fbe49c" stroke="#fbe49c" strokeWidth="3.500" strokeDasharray="2.500 1.800" />
            <circle cx="7" cy="17" r="4.500" fill="#f0c860" stroke="#5c4410" />
            <circle cx="7" cy="17" r="1.500" fill="#30240c" />
          </svg>
          <span className="mt-px leading-8">mola de compressao</span>
        </li>
        {treeItems.map((item) => (
          <li key={item.label} className={clsx("flex h-8", depthPadding[item.depth])}>
            <div className="mr-[7px] w-[14px] pt-2">
              {item.toggle && (
                <button
                  type="button"
                  aria-label={`${item.toggle === "+" ? "Expand" : "Collapse"} ${item.label}`}
                  className="block size-[14px]"
                >
                  <svg viewBox="0 0 14 14" className="size-[14px]">
                    <circle cx="7" cy="7" r="6.500" fill="#9a9a9e" />
                    <path d="M2 7h10" stroke="#000" strokeWidth="3" />
                    {item.toggle === "+" && <path d="M7 2v10" stroke="#000" strokeWidth="3" />}
                  </svg>
                </button>
              )}
            </div>
            <svg
              viewBox="0 0 26 26"
              aria-hidden="true"
              className={clsx(
                "size-[26px] flex-none",
                ["plane", "point", "line", "helix"].includes(item.icon) && hiddenTexture,
              )}
            >
              {treeIcons[item.icon]}
            </svg>
            <span
              className={clsx(
                "whitespace-nowrap",
                item.selected
                  ? "mt-[7px] ml-[3px] h-[21px] bg-[#fb8111] px-[2px] leading-[22px] text-[#ffe9b8]"
                  : "mt-[2px] ml-1 leading-8",
              )}
            >
              {item.label}
            </span>
          </li>
        ))}
      </ul>
    </div>
  );
}

const COILS = Array.from({ length: 10 }, (_, i) => i);
const PITCH = 38.3;

// right-hand side runs up behind the coil above, except on the first turn
function frontCoil(y: number, first: boolean) {
  const left = `M32 ${y - 74}C14 ${y - 62} 12 ${y - 36} 30 ${y - 22}C48 ${y - 6} 72 ${y} 98 ${y}C140 ${y} 178 ${y - 14} 191 ${y - 34}`;
  return first ? left : `${left}C200 ${y - 48} 202 ${y - 60} 201 ${y - 74}`;
}

function backCoil(y: number) {
  return `M18 ${y + 44}C20 ${y + 16} 58 ${y} 98 ${y}C146 ${y} 198 ${y + 24} 201 ${y + 56}`;
}

function Spring() {
  return (
    <svg
      viewBox="0 0 220 480"
      className="absolute top-[85px] right-[238px] h-[480px] w-[220px]"
      fill="none"
      aria-label="Compression spring"
    >
      {COILS.map((i) => {
        const d = backCoil(18 + i * PITCH);
        return (
          <g key={i}>
            <path d={d} stroke="#58748c" strokeWidth="14" />
            <path d={d} stroke="#6d8ead" strokeWidth="8" transform="translate(0 -3)" />
            <path d={d} stroke="#0a0f1e" strokeWidth="1.200" transform="translate(-1 0)" />
          </g>
        );
      })}
      <path d="M201 405C205 432 197 452 178 465" stroke="#060a16" strokeWidth="15" />
      <path d="M201 405C205 432 197 452 178 465" stroke="#5f84a8" strokeWidth="14" />
      <path d="M199 405C203 430 194 450 177 462" stroke="#7598bb" strokeWidth="7" />
      <path d="M190 415C198 425 190 450 184 468" stroke="#060a16" strokeWidth="1.200" />
      <ellipse cx="178" cy="466" rx="6" ry="4" fill="#7598bb" stroke="#060a16" strokeWidth="1.500" transform="rotate(20 178 466)" />
      {[...COILS].reverse().map((i) => {
        const d = frontCoil(106 + i * PITCH, i === 0);
        const top = i * PITCH;
        return (
          <g key={i}>
            <path
              d={`M30 ${top + 84}C48 ${top + 100} 72 ${top + 106} 98 ${top + 106}C140 ${top + 106} 178 ${top + 92} 191 ${top + 72}`}
              stroke="#060a16"
              strokeWidth="14"
              transform="translate(0 1.500)"
            />
            <path d={d} stroke="#587b9c" strokeWidth="14" />
            <path d={d} stroke="#688cb0" strokeWidth="11" />
            <path d={d} stroke="#7598bb" strokeWidth="7" />
            <path
              d={`M44 ${top + 91}C60 ${top + 102} 80 ${top + 104} 116 ${top + 103}`}
              stroke="#a4c3d8"
              strokeWidth="3"
              strokeLinecap="round"
              opacity=".55"
            />
            <path
              d={`M34 ${top + 36}C22 ${top + 42} 22 ${top + 66} 34 ${top + 77}C46 ${top + 88} 60 ${top + 95} 76 ${top + 98}`}
              stroke="#060a16"
              strokeWidth="1.300"
            />
            <path
              d={`M198 ${top + 66}C200 ${top + 82} 188 ${top + 88} 188 ${top + 106}`}
              stroke="#060a16"
              strokeWidth="1.300"
            />
          </g>
        );
      })}
      {/* first turn closes over the column on the right */}
      <path d="M98 18C146 18 198 42 202 78" stroke="#5f819f" strokeWidth="14" />
      <path d="M98 16C146 16 198 38 202 74" stroke="#7598bb" strokeWidth="8" />
      <path d="M40 42C52 26 76 18 100 17C140 18 184 38 197 70" stroke="#060a16" strokeWidth="1.200" />
      <path d="M23 62C22 48 26 38 35 34" stroke="#060a16" strokeWidth="1.200" />
      <path d="M122 99C150 96 174 84 186 70L199 73C186 88 156 98 128 100Z" fill="#688cb0" stroke="#060a16" strokeWidth="1.500" />
      <path d="M134 98C160 95 182 84 196 75" stroke="#060a16" />
    </svg>
  );
}

function Compass() {
  return (
    <svg viewBox="0 0 90 130" className="absolute top-[25px] right-[79px] h-[130px] w-[90px]" aria-label="Compass">
      <g fill="#1c4560" stroke="#d3cdfb" strokeWidth="2" strokeLinejoin="round">
        <path d="M45 21C22 34 8 58 8 84L45 64L82 84C82 58 68 34 45 21Z" />
        <path d="M5 101L45 77L85 101C84 131 6 131 5 101Z" />
        <path d="M45 8v90" />
      </g>
      <circle cx="45" cy="8" r="3.500" fill="#d3cdfb" />
      <rect x="40" y="94" width="10" height="10" fill="#cc0808" />
      <g fontSize="12" fill="#e6da52">
        <text x="45" y="17">z</text>
        <text x="8" y="96">x</text>
        <text x="80" y="96">y</text>
      </g>
    </svg>
  );
}

function AxisTriad() {
  return (
    <svg viewBox="0 0 60 60" className="absolute right-[4px] bottom-[12px] size-[60px]" aria-hidden="true">
      <path d="M24 40V17M24 40L9 47M24 40l19 10" fill="none" stroke="#fff" strokeWidth="1.200" />
      <g fontSize="13" fill="#fff">
        <text x="22" y="17">z</text>
        <text x="4" y="52">x</text>
        <text x="43" y="52">y</text>
      </g>
    </svg>
  );
}

const dialogButtonClasses =
  "flex h-[22px] items-center border-2 bg-[#d3d0e6] pl-[5px] text-[#16162c]";

function EditParameterDialog() {
  return (
    <form
      role="dialog"
      aria-label="Edit Parameter"
      className="absolute top-[278px] left-[316px] flex w-[366px] flex-col overflow-hidden border border-[#5f9ac0] bg-[#fee6c3]"
    >
      <div className="flex h-[26px] items-center bg-white pl-[3px] text-[#1c1c1c]">
        <span className="flex-1">Edit Parameter</span>
        <button type="button" aria-label="Help" className="w-[46px] text-[13px]">
          ?
        </button>
        <button type="button" aria-label="Close dialog" className="flex w-[46px] justify-center">
          <svg viewBox="0 0 12 12" className="size-3" stroke="#222">
            <path d="M1 1l10 10M11 1L1 11" />
          </svg>
        </button>
      </div>
      <div className="flex gap-[5px] pt-3 pr-[13px] pl-[10px]">
        <input
          aria-label="Parameter name"
          readOnly
          value="Ângulo Inicial"
          className="h-[19px] w-[180px] border-t-2 border-l-2 border-[#77746c] bg-white pl-[3px]"
        />
        <div className="flex h-[19px] flex-1 border-t-2 border-l-2 border-[#77746c] bg-white">
          <input
            aria-label="Parameter value"
            readOnly
            value="0deg"
            className="ml-px h-[15px] w-[28px] bg-[#0b74d0] text-white"
          />
          <div className="-mt-[2px] ml-auto flex w-[18px] flex-col">
            {["M0 4h8L4 0z", "M0 0h8L4 4z"].map((d, index) => (
              <button
                key={d}
                type="button"
                aria-label={index === 0 ? "Increase" : "Decrease"}
                className="flex h-[10px] items-center justify-center border border-[#44444c] bg-[#e4e2ea]"
              >
                <svg viewBox="0 0 8 4" className="h-1 w-2">
                  <path d={d} />
                </svg>
              </button>
            ))}
          </div>
        </div>
      </div>
      <div className="relative flex h-[42px] justify-end gap-[7px] pt-3 pr-[8px]">
        <svg viewBox="0 0 60 40" className="absolute bottom-0 left-0 h-10 w-[60px]" aria-hidden="true">
          <defs>
            <radialGradient id="glow">
              <stop offset="0" stopColor="#ffb840" />
              <stop offset=".5" stopColor="#ffc468" stopOpacity=".6" />
              <stop offset="1" stopColor="#fee6c3" stopOpacity="0" />
            </radialGradient>
            <radialGradient id="planet" cx=".6" cy=".4" r=".6">
              <stop offset="0" stopColor="#b4d4e0" />
              <stop offset=".6" stopColor="#5c98bc" />
              <stop offset="1" stopColor="#4c6c80" />
            </radialGradient>
          </defs>
          <ellipse cx="22" cy="26" rx="30" ry="26" fill="url(#glow)" />
          <path d="M0 21c16-3 32 6 39 19H0z" fill="url(#planet)" />
          <path d="M0 30c10-1 16 4 20 10H0z" fill="#40525c" />
        </svg>
        <button type="submit" className={clsx(dialogButtonClasses, "w-[67px] border-[#55536a]")}>
          <span className="mr-[14px] size-3 rounded-full bg-[radial-gradient(circle_at_35%_30%,#b8f0b0,#28a028_50%,#0c5c10)]" />
          OK
        </button>
        <button
          type="button"
          className={clsx(dialogButtonClasses, "w-[66px] border-[#f2f0fa] border-r-[#77758a] border-b-[#77758a]")}
        >
          <span className="mr-1 size-3 flex-none rounded-full bg-[radial-gradient(circle_at_35%_30%,#f8c0b0,#c83030_50%,#7c1010)]" />
          Cancel
        </button>
      </div>
    </form>
  );
}

function Viewport() {
  return (
    <main className="relative min-w-0 flex-1 overflow-hidden border-l-2 border-[#8d8ba0] bg-[#333165] font-['Open_Sans','Noto_Sans',sans-serif]">
      <div className="absolute inset-y-0 -left-[2px] right-0">
        <SpecTree />
        <Spring />
        <Compass />
        <AxisTriad />
        <EditParameterDialog />
        <p className="pointer-events-none absolute top-[264px] left-[409px] font-['Liberation_Mono','Noto_Sans_CJK_SC',monospace] text-[48px] leading-[66px] whitespace-nowrap text-[#e9e9ee]/80 [text-shadow:1px_1px_1px_#66666e]">
          <span className="font-['Noto_Sans_CJK_SC',sans-serif] text-[58px] font-light">莫西网</span>
          www.3dmox.com
        </p>
      </div>
    </main>
  );
}

function SideToolbar() {
  return (
    <aside className="w-[38px] flex-none border-l-4 border-white bg-[linear-gradient(to_right,#dcdaee,#d0cde6_70%,#a9a7bc)] pt-[6px]">
      {sideTools.map((group) => (
        <div key={group.tools[0].icon} className={group.className} role="toolbar">
          <div className="mb-[6px] h-[2px] w-4 border-b border-[#a3a1b6] bg-white" />
          {group.tools.map((tool) => (
            <ToolButton key={tool.icon} tool={tool} vertical />
          ))}
        </div>
      ))}
    </aside>
  );
}

function BottomToolbar() {
  return (
    <div className={clsx(toolbarClasses, "h-[38px] border-b border-[#6c6a80] pt-[2px] pl-[6px]")}>
      {bottomTools.map((tools) => (
        <ToolGroup key={tools[0].icon} tools={tools} />
      ))}
      <svg viewBox="0 0 44 34" className="mr-[3px] ml-auto h-[34px] w-11 flex-none" aria-label="CATIA">
        <path d="M11 2c6-2 11 0 7 4l-5 4" fill="none" stroke="#c8283c" strokeWidth="2" />
        <g fontFamily="Liberation Sans, sans-serif" fontStyle="italic">
          <text x="1" y="20" fontSize="15" fill="#26347c">D</text>
          <text x="14" y="19" fontSize="15" fill="#dcb430">S</text>
          <text x="6" y="31" fontSize="10" fontWeight="700" fill="#26248c">CATIA</text>
        </g>
      </svg>
    </div>
  );
}

function StatusBar() {
  return (
    <footer className="flex h-6 items-center bg-[#d0cde6] pr-[2px] pl-[3px] text-[#16162c]">
      <span className="flex-1">Edit parameter</span>
      <input
        aria-label="Power input"
        className="mr-[2px] h-5 w-[299px] border-t-2 border-l-2 border-[#6f6d80] bg-white"
      />
      <button
        type="button"
        aria-label="Command list"
        className="flex h-5 w-8 items-center justify-center border border-[#f2f0fa] border-r-[#8c8aa0] border-b-[#8c8aa0] bg-[#c4c2d4]"
      >
        <svg viewBox="0 0 16 14" className="h-[14px] w-4" fill="none" stroke="#8c8aa0">
          <path d="M2.500 2.500h8v8h-8zM8 11.500h5.500V5" />
          <path d="M3.500 3.500h6v6" stroke="#fff" />
        </svg>
      </button>
      <button
        type="button"
        aria-label="Knowledge"
        className="flex h-5 w-8 items-center justify-center border border-[#f2f0fa] border-r-[#8c8aa0] border-b-[#8c8aa0] bg-[#c4c2d4]"
      >
        <svg viewBox="0 0 16 14" className="h-[14px] w-4" fill="none" stroke="#8c8aa0">
          <circle cx="7" cy="7" r="4.500" />
          <path d="M2 12.500h11.500V2M6 5h3v4H6" />
          <circle cx="7" cy="7" r="3.500" stroke="#fff" />
        </svg>
      </button>
    </footer>
  );
}

export default function App() {
  return (
    <div className="flex min-h-screen flex-col bg-white font-['Roboto','Open_Sans',sans-serif] text-[12px] leading-4">
      <TitleBar />
      <MenuBar />
      <TopToolbar />
      <div className="flex flex-1">
        <Viewport />
        <SideToolbar />
      </div>
      <BottomToolbar />
      <StatusBar />
    </div>
  );
}
